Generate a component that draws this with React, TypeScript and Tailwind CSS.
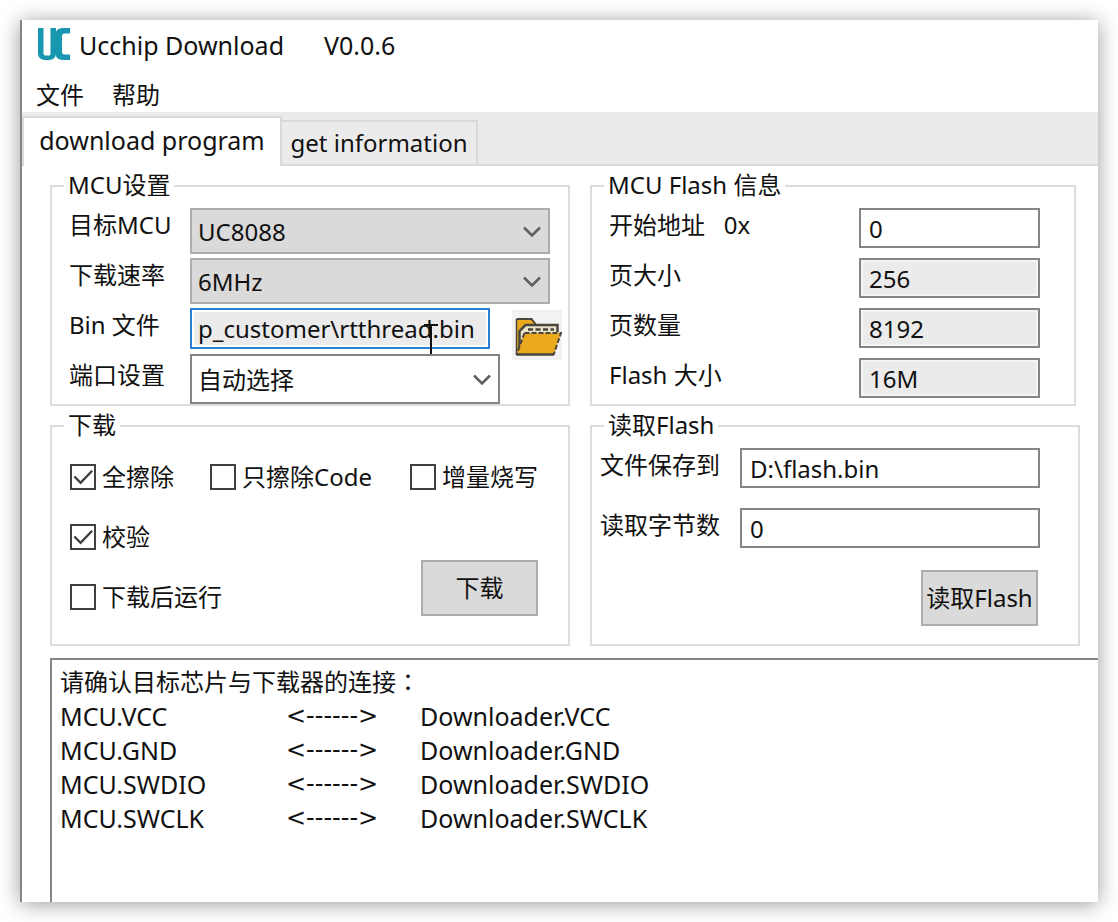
import { useState, type ReactNode } from 'react';

const pins = ['VCC', 'GND', 'SWDIO', 'SWCLK'];

const fieldClass = 'h-10 border-2 border-[#858585] px-2 rounded-none outline-none';

function Logo() {
  return (
    <svg width="34" height="34" viewBox="0 0 34 34" aria-hidden="true">
      <path
        d="M1 0h5.500v25.500q0 2 2 2h3.500q1.500 0 1.500-1.500V0H19v25q0 7-7 7H8q-7 0-7-7z"
        fill="#1897b0"
      />
      <path d="M33 0v5.500h-5.500q-2.500 0-2.500 2.500v16q0 2.500 2.500 2.500H33V32h-7q-7.500 0-7.500-6.500v-19Q18.500 0 26 0z" fill="#1897b0" />
    </svg>
  );
}

function FolderIcon() {
  return (
    <svg width="50" height="50" viewBox="0 0 50 50" aria-hidden="true">
      <path d="M4.500 44V9h15l4 5v8l-10 4z" fill="#eaa91e" />
      <path d="M4.500 9h15l4 5" fill="none" stroke="#4a463c" strokeWidth="2" />
      <path d="M8 40V20l5-5h33v10H14z" fill="#e9e2c8" />
      <path d="M7.500 38V21l6-6h32v7" fill="none" stroke="#4a463c" strokeWidth="2.500" />
      <path d="M16 19.500h26" stroke="#4a463c" strokeWidth="2.500" strokeDasharray="5 2.500" />
      <path d="M12.500 23H49l-7.500 22h-37z" fill="#eaa91e" />
      <path d="M12.500 23H49l-7.500 22" fill="none" stroke="#4a463c" strokeWidth="2" strokeDasharray="5 2" />
      <path d="M12.500 23l-8 21.500" fill="none" stroke="#4a463c" strokeWidth="2" strokeDasharray="5 2" />
      <path d="M4.500 44.500H42" fill="none" stroke="#4a463c" strokeWidth="2.500" />
      <path d="M4.500 9v36" stroke="#4a463c" strokeWidth="1.500" />
    </svg>
  );
}

function Group({ title, className = '', children }: { title: string; className?: string; children: ReactNode }) {
  return (
    <fieldset className={`min-w-0 border-2 border-[#dcdcdc] px-3 ${className}`}>
      <legend className="px-1 pb-[2px] leading-[26px]">{title}</legend>
      {children}
    </fieldset>
  );
}

function Select({ id, options, className = '' }: { id: string; options: string[]; className?: string }) {
  return (
    <div className={`relative ${className}`}>
      <select
        id={id}
        className="block size-full appearance-none border-2 border-inherit bg-transparent pl-[6px] pr-10 pt-[2px] rounded-none outline-none"
      >
        {options.map((o) => (
          <option key={o}>{o}</option>
        ))}
      </select>
      <svg
        className="pointer-events-none absolute right-2 top-1/2 -mt-1.5"
        width="20"
        height="14"
        viewBox="0 0 20 14"
        fill="none"
        stroke="#606060"
        strokeWidth="2.500"
        aria-hidden="true"
      >
        <path d="M2 2.500l8 8 8-8" />
      </svg>
    </div>
  );
}

function Check({ label, checked = false }: { label: string; checked?: boolean }) {
  const [on, setOn] = useState(checked);
  return (
    <label className="flex items-center gap-[6px] whitespace-nowrap">
      <span className="relative block size-[26px] shrink-0">
        <input
          type="checkbox"
          checked={on}
          onChange={() => setOn(!on)}
          className="block size-full appearance-none border-2 border-[#404040] bg-white"
        />
        {on && (
          <svg
            className="pointer-events-none absolute inset-0"
            width="26"
            height="26"
            viewBox="0 0 27 27"
            fill="none"
            stroke="#404040"
            strokeWidth="2.500"
            aria-hidden="true"
          >
            <path d="M4.500 13l6.500 6.500L23 7" />
          </svg>
        )}
      </span>
      {label}
    </label>
  );
}

function FlashField({ id, label, value, readOnly }: { id: string; label: string; value: string; readOnly?: boolean }) {
  return (
    <div className="flex h-[50px] items-start justify-between last:h-[46px]">
      <label htmlFor={id} className="whitespace-pre leading-[34px]">
        {label}
      </label>
      <input
        id={id}
        defaultValue={value}
        readOnly={readOnly}
        className={`${fieldClass} w-[181px] ${readOnly ? 'bg-[#ebebeb] ring-2 ring-inset ring-[#f4f4f4]' : 'bg-white'}`}
      />
    </div>
  );
}

export default function App() {
  return (
    <div className="flex min-h-screen bg-white p-5 font-['Noto_Sans','Noto_Sans_CJK_SC',sans-serif] text-[24px] leading-8 text-[#111]">
      <div className="flex min-w-0 flex-1 flex-col border-l-2 border-[#858585] bg-white shadow-[0_2px_20px_rgba(0,0,0,0.4)]">
        <header className="flex h-[50px] items-center pl-[15px] text-[25px]">
          <Logo />
          <h1 className="ml-2 whitespace-pre">Ucchip Download</h1>
          <span className="ml-10">V0.0.6</span>
        </header>
        <nav className="flex h-[42px] items-center gap-7 pl-[14px] pt-2">
          <button type="button">文件</button>
          <button type="button">帮助</button>
        </nav>

        <div role="tablist" className="flex h-[54px] items-end bg-[#ebebeb]">
          <button
            type="button"
            role="tab"
            aria-selected="true"
            className="h-[50px] w-[260px] border-2 border-b-0 border-[#dadada] bg-white pb-1 text-[25px] whitespace-nowrap"
          >
            download program
          </button>
          <button
            type="button"
            role="tab"
            aria-selected="false"
            className="h-[46px] w-[196px] border-2 border-l-0 border-[#dadada] whitespace-nowrap"
          >
            get information
          </button>
          <div className="flex-1 self-stretch border-b-2 border-[#dadada]" />
        </div>

        <main className="flex flex-1 flex-col pl-7 pt-[6px]">
          <div className="grid grid-cols-[520fr_490fr] gap-x-5 gap-y-[6px] pr-[18px]">
            <Group title="MCU设置">
              <div className="grid grid-cols-[121px_1fr] pl-[5px] pr-[6px] pt-2">
                <label htmlFor="mcu" className="h-[50px] leading-[34px]">目标MCU</label>
                <Select id="mcu" options={['UC8088']} className="mr-3 h-[46px] border-[#adadad] bg-[#dadada]" />

                <label htmlFor="speed" className="h-[50px] leading-[34px]">下载速率</label>
                <Select id="speed" options={['6MHz']} className="mr-3 h-[46px] border-[#adadad] bg-[#dadada]" />

                <label htmlFor="bin" className="h-[46px] leading-[34px]">Bin 文件</label>
                <div className="flex h-[46px] items-start">
                  <div className="relative w-[300px]">
                    <input
                      id="bin"
                      readOnly
                      defaultValue="p_customer\rtthread.bin"
                      className="block h-[41px] w-full border-2 border-[#2a7fd6] bg-[#ebebeb] px-[6px] outline-none ring-2 ring-inset ring-white"
                    />
                    <svg
                      className="pointer-events-none absolute left-[233px] top-4"
                      width="16"
                      height="32"
                      viewBox="0 0 16 32"
                      stroke="#111"
                      strokeWidth="2"
                      aria-hidden="true"
                    >
                      <path d="M1 1h14M8 1v30M1 31h14" />
                    </svg>
                  </div>
                  <button type="button" aria-label="打开文件" className="ml-[22px] mt-[2px] shrink-0 bg-[#f2f2f2]">
                    <FolderIcon />
                  </button>
                </div>

                <label htmlFor="port" className="pt-1 leading-[34px]">端口设置</label>
                <Select id="port" options={['自动选择']} className="h-[50px] w-[310px] border-[#858585] bg-white" />
              </div>
            </Group>

            <Group title="MCU Flash 信息" className="mr-1">
              <div className="pl-[5px] pr-[22px] pt-2">
                <FlashField id="start" label={'开始地址   0x'} value="0" />
                <FlashField id="page-size" label="页大小" value="256" readOnly />
                <FlashField id="page-count" label="页数量" value="8192" readOnly />
                <FlashField id="flash-size" label="Flash 大小" value="16M" readOnly />
              </div>
            </Group>

            <Group title="下载">
              <div className="pb-[17px] pl-[6px] pt-[7px]">
                <div className="grid h-[60px] grid-cols-[140px_200px_1fr] items-center">
                  <Check label="全擦除" checked />
                  <Check label="只擦除Code" />
                  <Check label="增量烧写" />
                </div>
                <div className="flex items-end justify-between pr-[18px]">
                  <div className="grid grid-rows-[60px_60px] items-center">
                    <Check label="校验" checked />
                    <Check label="下载后运行" />
                  </div>
                  <button type="button" className="mb-[11px] h-14 w-[117px] border-2 border-[#adadad] bg-[#dadada]">
                    下载
                  </button>
                </div>
              </div>
            </Group>

            <Group title="读取Flash">
              <div className="-ml-1 flex flex-col pr-[26px] pt-2">
                <div className="flex h-[60px] items-start">
                  <label htmlFor="save-to" className="w-[140px] leading-[34px]">文件保存到</label>
                  <input id="save-to" defaultValue="D:\flash.bin" className={`${fieldClass} min-w-0 flex-1 bg-white`} />
                </div>
                <div className="flex h-[60px] items-start">
                  <label htmlFor="bytes" className="w-[140px] leading-[34px]">读取字节数</label>
                  <input id="bytes" defaultValue="0" className={`${fieldClass} min-w-0 flex-1 bg-white`} />
                </div>
                <button
                  type="button"
                  className="mr-[2px] mt-[2px] h-14 w-[117px] self-end whitespace-nowrap border-2 border-[#adadad] bg-[#dadada]"
                >
                  读取Flash
                </button>
              </div>
            </Group>
          </div>

          <div role="log" className="mt-3 flex-1 border-l-2 border-t-2 border-[#858585] pl-2 pt-1 leading-[34px]">
            <p>
              请确认目标芯片与下载器的连接<span className="font-['Noto_Sans_CJK_TC',sans-serif]">：</span>
            </p>
            {pins.map((pin) => (
              <div key={pin} className="grid h-[34px] grid-cols-[226px_134px_1fr] text-[25px]">
                <span>MCU.{pin}</span>
                <span className="font-['DejaVu_Sans',sans-serif] text-[24px]">{'<------>'}</span>
                <span>Downloader.{pin}</span>
              </div>
            ))}
          </div>
        </main>
      </div>
    </div>
  );
}
